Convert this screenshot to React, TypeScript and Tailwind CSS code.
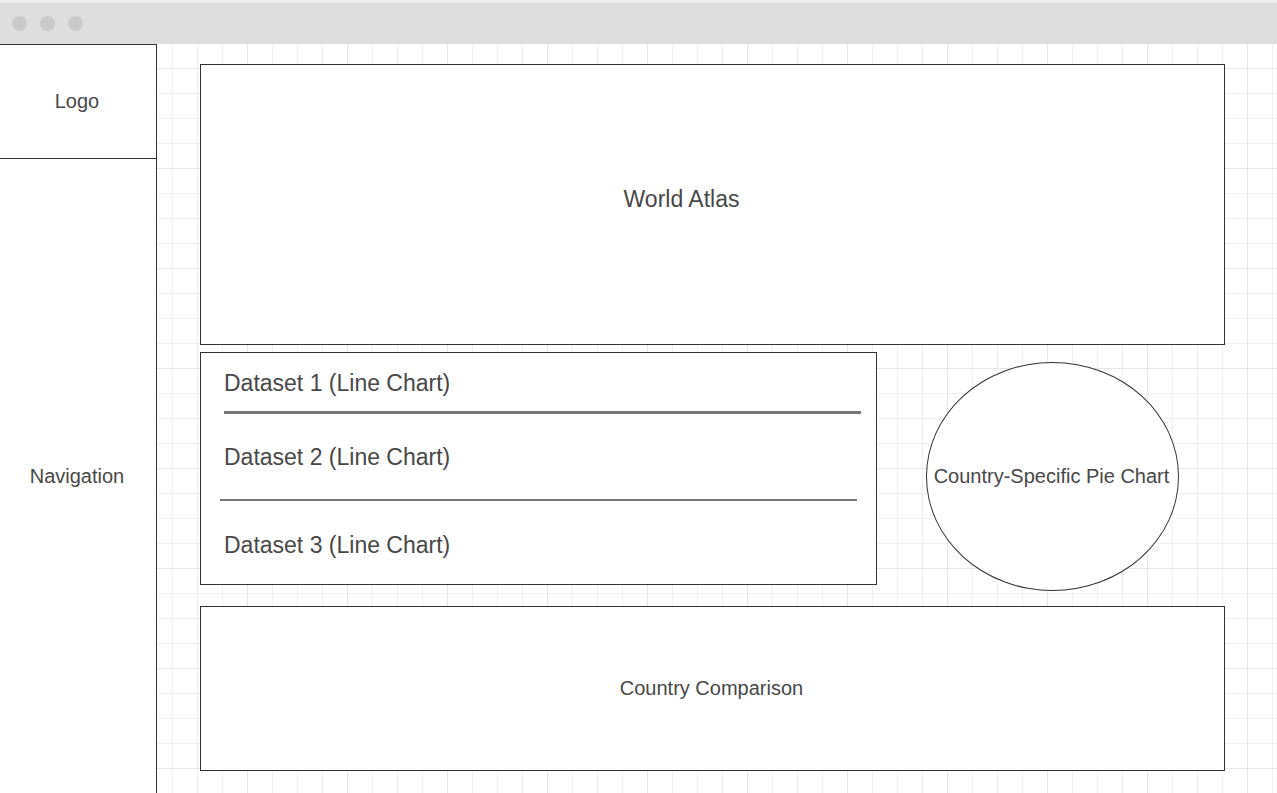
import React from "react";

export default function App() {
  return (
    <div className="w-[1277px] h-[793px] flex flex-col overflow-hidden bg-white text-[#484848] font-['Liberation_Sans',Arial,sans-serif]">
      <div className="h-[44px] shrink-0 bg-[#dddddd] border-t-[3px] border-[#eeeeee] flex items-center pl-[12px] gap-[13px]">
        <div className="w-[15px] h-[15px] rounded-full bg-[#c9c9c9]" />
        <div className="w-[15px] h-[15px] rounded-full bg-[#c9c9c9]" />
        <div className="w-[15px] h-[15px] rounded-full bg-[#c9c9c9]" />
      </div>
      <div className="flex flex-1 min-h-0">
        <div className="w-[157px] shrink-0 bg-white border-r border-t border-[#333333] flex flex-col">
          <div className="h-[114px] border-b border-[#333333] flex items-center justify-center text-[20px] pr-[2px] pb-[1px]">
            Logo
          </div>
          <div className="flex-1 flex items-center justify-center text-[20px] pr-[2px]">
            Navigation
          </div>
        </div>
        <div className="flex-1 pl-[43px] pt-[20px] flex flex-col bg-[linear-gradient(to_right,#e6e6e6_1px,transparent_1px),linear-gradient(to_bottom,#e6e6e6_1px,transparent_1px),linear-gradient(to_right,#f0f0f0_1px,transparent_1px),linear-gradient(to_bottom,#f0f0f0_1px,transparent_1px)] bg-[size:100px_100px,100px_100px,25px_25px,25px_25px] bg-[position:90px_24px,90px_24px,15px_24px,15px_24px]">
          <div className="w-[1025px] h-[281px] border border-[#333333] bg-white flex items-center justify-center text-[23px] pb-[11px] pr-[62px]">
            World Atlas
          </div>
          <div className="flex items-start mt-[7px]">
            <div className="w-[677px] h-[233px] border border-[#333333] bg-white flex flex-col">
              <div className="text-[23px] leading-[26px] ml-[23px] mt-[17px]">Dataset 1 (Line Chart)</div>
              <div className="ml-[23px] mt-[15px] w-[637px] h-[3px] bg-[#777777]" />
              <div className="text-[23px] leading-[26px] ml-[23px] mt-[30px]">Dataset 2 (Line Chart)</div>
              <div className="ml-[19px] mt-[29px] w-[637px] h-[2px] bg-[#777777]" />
              <div className="text-[23px] leading-[26px] ml-[23px] mt-[31px]">Dataset 3 (Line Chart)</div>
            </div>
            <div className="ml-[49px] mt-[10px] w-[253px] h-[229px] rounded-[50%] border border-[#333333] bg-white flex items-center justify-center text-[20px] whitespace-nowrap pr-[2px] pb-[1px]">
              Country-Specific Pie Chart
            </div>
          </div>
          <div className="mt-[15px] w-[1025px] h-[165px] border border-[#333333] bg-white flex items-center justify-center text-[20px] pr-[2px] pb-[1px]">
            Country Comparison
          </div>
        </div>
      </div>
    </div>
  );
}
